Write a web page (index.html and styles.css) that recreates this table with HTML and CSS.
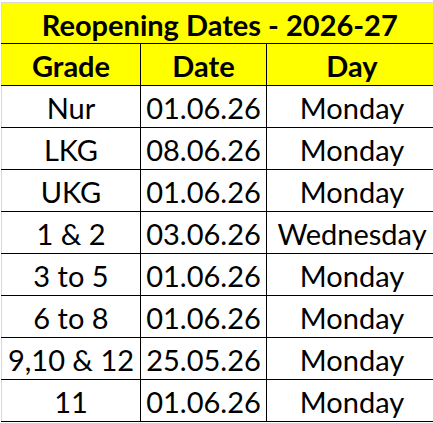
FILE: index.html
```html
<!DOCTYPE html>
<html lang="en">
<head>
  <meta charset="UTF-8">
  <title>Reopening Dates - 2026-27</title>
  <link rel="stylesheet" href="styles.css">
</head>
<body>
  <table class="dates">
    <colgroup>
      <col class="col-grade">
      <col class="col-date">
      <col class="col-day">
    </colgroup>
    <thead>
      <tr class="title-row">
        <th colspan="3">Reopening Dates - 2026-27</th>
      </tr>
      <tr class="head-row">
        <th>Grade</th>
        <th>Date</th>
        <th>Day</th>
      </tr>
    </thead>
    <tbody>
      <tr><td>Nur</td><td>01.06.26</td><td>Monday</td></tr>
      <tr><td>LKG</td><td>08.06.26</td><td>Monday</td></tr>
      <tr><td>UKG</td><td>01.06.26</td><td>Monday</td></tr>
      <tr><td>1 &amp; 2</td><td>03.06.26</td><td>Wednesday</td></tr>
      <tr><td>3 to 5</td><td>01.06.26</td><td>Monday</td></tr>
      <tr><td>6 to 8</td><td>01.06.26</td><td>Monday</td></tr>
      <tr><td>9,10 &amp; 12</td><td>25.05.26</td><td>Monday</td></tr>
      <tr><td>11</td><td>01.06.26</td><td>Monday</td></tr>
    </tbody>
  </table>
</body>
</html>
```
FILE: styles.css
```css
body {
  margin: 0;
  padding: 2px 0 0 1px;
  overflow: hidden;
  background: #fff;
  font-family: Lato, "Liberation Sans", sans-serif;
  color: #000;
}
.dates {
  border-collapse: collapse;
  table-layout: fixed;
  width: 436px;
  border-left: 1px solid #d9d9d9;
  border-top: 1px solid #d9d9d9;
}
.col-grade { width: 139px; }
.col-date { width: 126px; }
.col-day { width: 171px; }
.dates th,
.dates td {
  height: 39px;
  padding: 2px 0 0;
  text-align: center;
  vertical-align: middle;
  white-space: nowrap;
  font-size: 29px;
  line-height: 1;
}
.title-row th {
  height: 38px;
  border-bottom: 1px solid #000;
}
.dates th {
  background: #ffff00;
  font-weight: bold;
}
.dates td,
.head-row th {
  border: 1px solid #000;
}
.dates tr > :first-child {
  border-left-color: #d9d9d9;
}
```
